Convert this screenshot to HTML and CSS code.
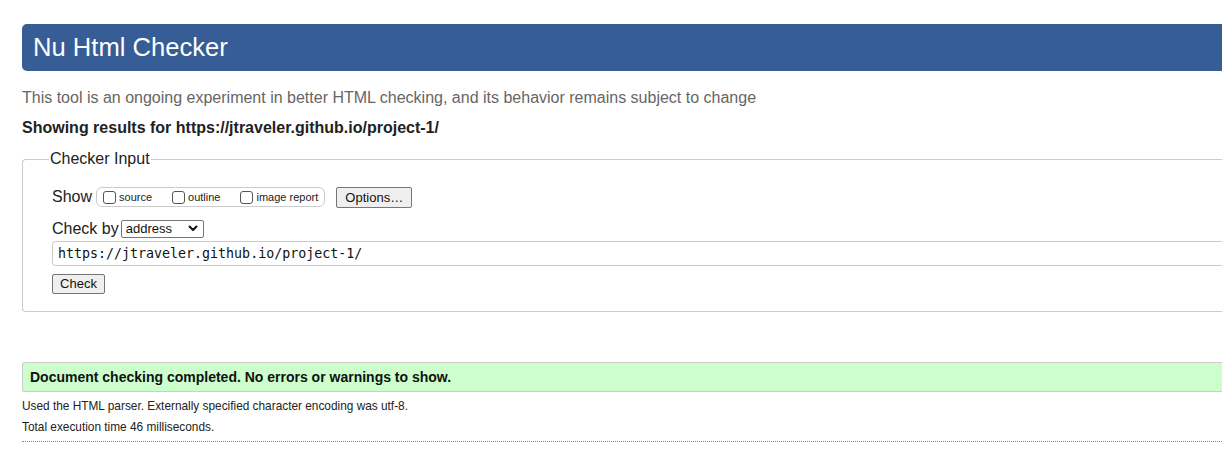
FILE: index.html
```html
<!DOCTYPE html>
<html>
<head>
<meta charset="utf-8">
<title>Nu Html Checker</title>
<link rel="stylesheet" href="styles.css">
</head>
<body>
<div class="page">
  <h1 class="banner">Nu Html Checker</h1>
  <p class="tagline">This tool is an ongoing experiment in better HTML checking, and its behavior remains subject to change</p>
  <p class="showing">Showing results for https://jtraveler.github.io/project-1/</p>
  <fieldset class="input-box">
    <legend class="input-legend">Checker Input</legend>
    <div class="row show-row">
      <span class="label">Show</span>
      <span class="opts">
        <label class="opt"><span class="cb"></span>source</label>
        <label class="opt"><span class="cb"></span>outline</label>
        <label class="opt"><span class="cb"></span>image report</label>
      </span>
      <span class="btn btn-options">Options…</span>
    </div>
    <div class="row by-row">
      <span class="label">Check by</span>
      <span class="select">address<svg class="chev" width="10" height="7" viewBox="0 0 10 7"><path d="M1.5 1.5 L5 5 L8.5 1.5" fill="none" stroke="#111" stroke-width="2" stroke-linecap="round" stroke-linejoin="round"/></svg></span>
    </div>
    <div class="url">https://jtraveler.github.io/project-1/</div>
    <span class="btn btn-check">Check</span>
  </fieldset>
  <div class="success">Document checking completed. No errors or warnings to show.</div>
  <p class="details">Used the HTML parser. Externally specified character encoding was utf-8.</p>
  <p class="details">Total execution time 46 milliseconds.</p>
  <div class="dotted"></div>
</div>
</body>
</html>
```
FILE: styles.css
```css
html, body {
  margin: 0;
  padding: 0;
  overflow: hidden;
  background: #fff;
}
body {
  font-family: "Liberation Sans", Arial, sans-serif;
  color: #111;
}
.page {
  width: 1320px;
  padding: 24px 0 0 22px;
}
.banner {
  margin: 0;
  height: 47px;
  box-sizing: border-box;
  background: #365d95;
  color: #fff;
  font-weight: normal;
  font-size: 25.6px;
  line-height: 47px;
  padding-left: 11px;
  border-radius: 5px 0 0 5px;
}
.tagline {
  margin: 18px 0 0 0;
  font-size: 16px;
  line-height: 18px;
  color: #666;
}
.showing {
  margin: 12px 0 0 0;
  font-size: 16px;
  line-height: 18px;
  font-weight: bold;
  color: #222;
}
.input-box {
  margin: 13px 0 0 0;
  padding: 0 0 17px 29px;
  border: 1px solid #ccc;
  border-right: none;
  border-radius: 4px 0 0 4px;
}
.input-legend {
  font-size: 16px;
  padding: 0 1px;
  margin-left: -3px;
  line-height: 18px;
  color: #222;
}
.row {
  display: flex;
  align-items: center;
}
.show-row {
  margin-top: 18px;
  height: 22px;
}
.label {
  font-size: 16px;
  color: #222;
}
.opts {
  display: flex;
  align-items: center;
  margin-left: 4px;
  height: 18px;
  border: 1px solid #ccc;
  border-radius: 6px;
  padding: 0 6px 0 6px;
  font-size: 11px;
  color: #222;
}
.opt {
  display: flex;
  align-items: center;
  margin-right: 20px;
}
.opt:last-child {
  margin-right: 0;
}
.cb {
  width: 11px;
  height: 11px;
  border: 1px solid #555;
  border-radius: 3px;
  margin-right: 3px;
  background: #fff;
}
.btn {
  display: inline-block;
  box-sizing: border-box;
  border: 1px solid #767676;
  border-radius: 2px;
  background: #efefef;
  color: #111;
  font-size: 13px;
  text-align: center;
}
.btn-options {
  margin-left: 11px;
  width: 76px;
  height: 21px;
  line-height: 19px;
}
.by-row {
  margin-top: 11px;
  height: 19px;
}
.select {
  margin-left: 2px;
  box-sizing: border-box;
  width: 83px;
  height: 18px;
  border: 1px solid #767676;
  border-radius: 2px;
  font-size: 13px;
  line-height: 16px;
  padding-left: 4px;
  display: flex;
  align-items: center;
  justify-content: space-between;
  padding-right: 5px;
}
.url {
  margin-top: 3px;
  height: 25px;
  box-sizing: border-box;
  border: 1px solid #ccc;
  border-right: none;
  border-radius: 4px 0 0 4px;
  font-family: "DejaVu Sans Mono", "Liberation Mono", monospace;
  font-size: 13.3px;
  line-height: 23px;
  padding-left: 5px;
  color: #111;
}
.btn-check {
  margin-top: 8px;
  width: 53px;
  height: 20px;
  line-height: 18px;
}
.success {
  margin-top: 50px;
  height: 30px;
  box-sizing: border-box;
  background: #ccffcc;
  border: 1px solid #ccc;
  border-right: none;
  border-radius: 3px 0 0 3px;
  font-size: 14px;
  font-weight: bold;
  line-height: 28px;
  padding-left: 7px;
  color: #111;
}
.details {
  margin: 7px 0 0 0;
  font-size: 11.85px;
  line-height: 14px;
  color: #222;
}
.details + .details {
  margin-top: 7px;
}
.dotted {
  margin-top: 7px;
  border-top: 1px dotted #888;
}
```
